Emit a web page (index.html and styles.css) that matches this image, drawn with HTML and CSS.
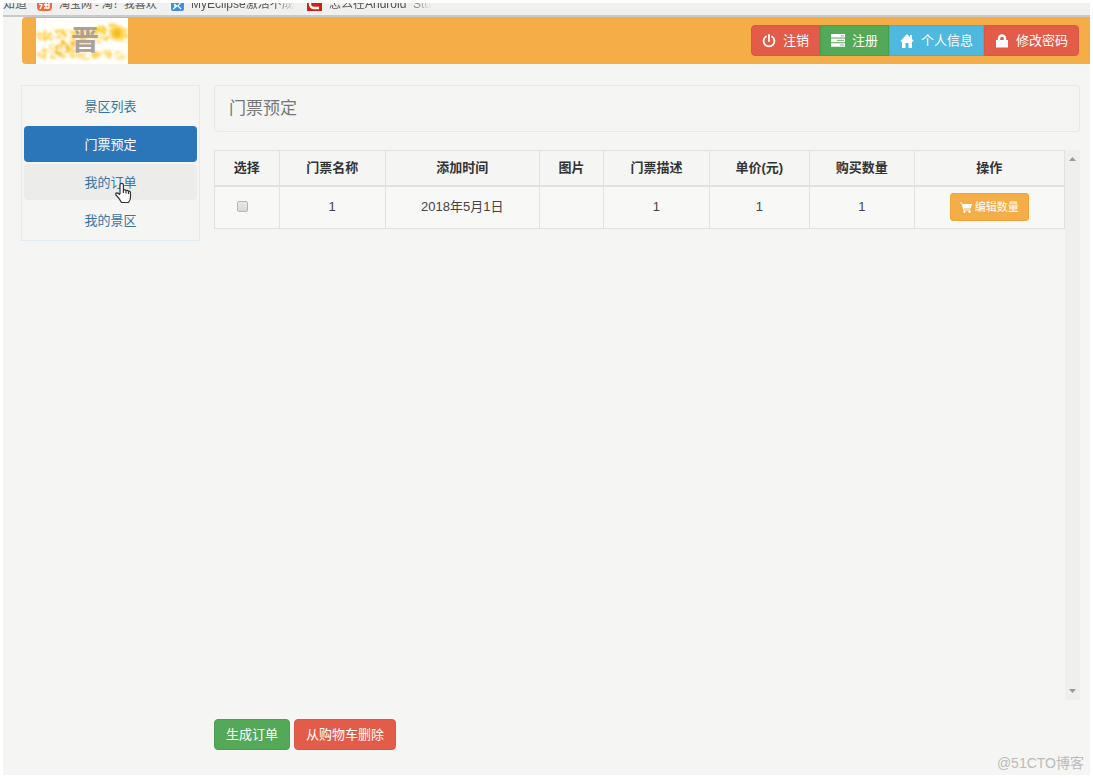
FILE: index.html
```html
<!DOCTYPE html>
<html lang="zh-CN">
<head>
<meta charset="utf-8">
<title>门票预定</title>
<link rel="stylesheet" href="styles.css">
</head>
<body>
<div class="window">
  <nav class="bookmarks" aria-label="书签">
    <a class="bookmark first" href="#">知道</a>
    <a class="bookmark taobao" href="#">
      <svg width="15" height="14" viewBox="0 0 15 14"><rect width="15" height="14" rx="4" fill="#ee6a3c"/><path d="M3 3l2 2M2 7l3 1-2 4M6 5h6v6H7M7 8h5M9 5v6" fill="none" stroke="#fff" stroke-width="1.3"/></svg>
      <span>淘宝网 - 淘！我喜欢</span></a>
    <a class="bookmark eclipse" href="#">
      <svg width="13" height="14" viewBox="0 0 13 14"><rect width="13" height="14" rx="2" fill="#3d8fe0"/><path d="M2 12l4-3-3-2M5 5h5L7 9l3 3M3 9h4" fill="none" stroke="#fff" stroke-width="1.2"/></svg>
      <span>MyEclipse激活不成功</span></a>
    <a class="bookmark android" href="#">
      <svg width="15" height="14" viewBox="0 0 15 14"><rect width="15" height="14" fill="#d41f16"/><path d="M12 3H7a4 4 0 0 0 0 8h5" fill="none" stroke="#fff" stroke-width="2.4"/></svg>
      <span>怎么在Android&nbsp; Stu</span></a>
  </nav>

  <header class="topbar">
    <a class="logo" href="#" aria-label="晋">
      <svg class="logo-art" viewBox="0 0 92 46">
        <defs>
          <filter id="splash" x="-10%" y="-30%" width="120%" height="160%">
            <feTurbulence type="fractalNoise" baseFrequency=".2" numOctaves="2" seed="8" result="noise"/>
            <feColorMatrix in="noise" type="matrix" values="0 0 0 0 0 0 0 0 0 0 0 0 0 0 0 0 7 0 0 -2.9" result="holes"/>
            <feComposite in="SourceGraphic" in2="holes" operator="in" result="dots"/>
            <feDisplacementMap in="dots" in2="noise" scale="7" result="spots"/>
            <feGaussianBlur in="spots" stdDeviation=".9"/>
          </filter>
          <radialGradient id="sun"><stop offset="0" stop-color="#f7b21c"/><stop offset=".5" stop-color="#fccb38"/><stop offset="1" stop-color="#ffe68a" stop-opacity=".3"/></radialGradient>
        </defs>
        <g filter="url(#splash)">
          <path d="M1 17Q14 9 32 12T60 9Q74 3 91 11V25Q76 19 64 24T39 27Q22 34 8 36L2 33Q18 26 35 21L2 22Z" fill="#ffd24a"/>
          <path d="M1 37Q18 26 35 31T63 32Q74 29 90 36V42L64 39Q48 45 40 39L7 42Z" fill="#ffdc72"/>
          <path d="M8 38L18 28L35 21L40 28L21 38Z" fill="#f9bb25"/>
        </g>
        <circle cx="81" cy="15" r="9" fill="url(#sun)"/>
        <circle cx="59" cy="37" r="5" fill="url(#sun)" opacity=".6"/>
      </svg>
      <span class="logo-text">晋</span>
    </a>
    <div class="actions">
      <button class="btn red" type="button"><svg width="14" height="14" viewBox="0 0 14 14"><path d="M4 2.5A5.4 5.4 0 1 0 10 2.5M7 1v6" fill="none" stroke="#fff" stroke-width="1.8" stroke-linecap="round"/></svg>注销</button>
      <button class="btn green" type="button"><svg width="14" height="14" viewBox="0 0 14 14"><path d="M0 0h14v3.600H0zM0 4.600h14v3.600H0zM0 9.200h14v3.600H0z" fill="#fff"/><path d="M10 1.800h3M6 6.400h7M9 11h4" stroke="#52a855" stroke-width=".8"/></svg>注册</button>
      <button class="btn blue" type="button"><svg width="14" height="14" viewBox="0 0 14 14"><path d="M7 0L0 7.500h2V14h3.500V9h3v5H12V7.500h2L12 5V1h-2v2z" fill="#fff"/></svg>个人信息</button>
      <button class="btn red" type="button"><svg width="14" height="14" viewBox="0 0 14 14"><path d="M1 6h12v7.500H1z" fill="#fff"/><path d="M4 7V4.500a3 3 0 0 1 6 0V7" fill="none" stroke="#fff" stroke-width="2.400"/></svg>修改密码</button>
    </div>
  </header>

  <div class="body">
    <nav class="sidebar" aria-label="菜单">
      <a href="#">景区列表</a>
      <a class="active" href="#" aria-current="page">门票预定</a>
      <a class="hovered" href="#">我的订单
        <svg class="cursor" width="18" height="22" viewBox="0 0 18 22"><path d="M6 12V3a1.700 1.700 0 0 1 3.400 0V8q1.600-1 2.600.6 1.700-.8 2.500.7 2-.5 2 1.700V15q0 3-2 5.500H7.500Q6 17 2 13q-1-2 1-2.200 1.500 0 3 2.200M9.400 8v3M12 8.600V11.500M14.500 9.300V12" fill="#fff" stroke="#333" stroke-width="1.200" stroke-linejoin="round"/></svg></a>
      <a href="#">我的景区</a>
    </nav>

    <main class="content">
      <h1 class="title">门票预定</h1>
      <div class="list">
        <div class="table-area">
          <table>
            <colgroup><col class="c-pick"><col class="c-name"><col class="c-time"><col class="c-image"><col class="c-desc"><col class="c-price"><col class="c-count"><col class="c-action"></colgroup>
            <thead>
              <tr><th>选择</th><th>门票名称</th><th>添加时间</th><th>图片</th><th>门票描述</th><th>单价(元)</th><th>购买数量</th><th>操作</th></tr>
            </thead>
            <tbody>
              <tr><td><input class="pick" type="checkbox" aria-label="选择"></td><td>1</td><td>2018年5月1日</td><td></td><td>1</td><td>1</td><td>1</td>
                <td><button class="btn small orange" type="button"><svg width="12" height="11" viewBox="0 0 12 11"><path d="M0 .5h2l.5 1.500H12L10.500 6.500H4L4.300 7.500H10.500V8.500H3.500L1.500 1.500H0z" fill="#fff"/><circle cx="4.500" cy="9.800" r="1.200" fill="#fff"/><circle cx="9.500" cy="9.800" r="1.200" fill="#fff"/></svg>编辑数量</button></td></tr>
            </tbody>
          </table>
        </div>
        <div class="scrollbar" aria-hidden="true">
          <svg width="7" height="4" viewBox="0 0 7 4"><path d="M0 4L3.500 0L7 4z" fill="#999"/></svg>
          <svg width="7" height="4" viewBox="0 0 7 4"><path d="M0 0h7L3.500 4z" fill="#999"/></svg>
        </div>
      </div>
      <div class="footer-actions">
        <button class="btn green" type="button">生成订单</button>
        <button class="btn red" type="button">从购物车删除</button>
      </div>
    </main>
  </div>
  <div class="watermark">@51CTO博客</div>
</div>
</body>
</html>
```
FILE: styles.css
```css
* { box-sizing: border-box; }

body {
  margin: 0;
  padding: 3px 3px 5px;
  background: #fff;
  color: #444;
  font: 13px/20px "Liberation Sans", "Noto Sans CJK SC", sans-serif;
}

a { color: #38749f; text-decoration: none; }
svg { flex: none; }

.window {
  position: relative;
  display: flex;
  flex-direction: column;
  min-height: calc(100vh - 8px);
  background: #f5f5f4;
}

.bookmarks {
  display: flex;
  align-items: flex-end;
  gap: 12px;
  height: 14px;
  padding-bottom: 4px;
  overflow: hidden;
  background: #f0f0ef;
  border-bottom: 2px solid #c9c9c9;
}

.bookmark {
  display: flex;
  flex: none;
  align-items: flex-end;
  gap: 7px;
  color: #555;
  font-size: 12px;
  line-height: 13px;
  white-space: nowrap;
}
.bookmark.first { width: 22px; }
.bookmark.taobao { width: 122px; font-size: 11px; }
.bookmark.eclipse { width: 124px; }
.bookmark.android { width: 126px; }
.bookmark.eclipse span,
.bookmark.android span {
  overflow: hidden;
  mask-image: linear-gradient(to right, #000 80%, transparent);
}

.topbar {
  display: flex;
  align-items: center;
  justify-content: space-between;
  height: 47px;
  margin-left: 19px;
  padding: 0 11px 0 14px;
  background: #f5ad47;
  border-radius: 4px 0 0 4px;
}

.logo {
  position: relative;
  display: flex;
  align-items: center;
  justify-content: center;
  width: 92px;
  height: 46px;
  background: #fffefb;
}
.logo-art { width: 92px; height: 46px; }
.logo-text {
  position: absolute;
  left: 35px;
  top: 7px;
  color: #aaa09c;
  font-size: 28px;
  font-weight: 700;
  line-height: 32px;
}

.btn {
  display: inline-flex;
  align-items: center;
  justify-content: center;
  height: 31px;
  padding: 0 11px;
  border: 1px solid transparent;
  border-radius: 4px;
  color: #fff;
  font: inherit;
  white-space: nowrap;
}
.red { background: #e25c49; border-color: #d95743; }
.green { background: #53a957; border-color: #4b9e50; }
.blue { background: #4fb8df; border-color: #46add5; }
.orange { background: #f5ad47; border-color: #f1a43a; }
.small { height: 28px; padding: 0 9px; border-radius: 3px; font-size: 11px; gap: 3px; }

.actions { display: flex; }
.actions .btn { gap: 7px; padding: 0 10px; border-radius: 0; }
.actions .btn:first-child { border-radius: 4px 0 0 4px; }
.actions .btn:last-child { border-radius: 0 4px 4px 0; }

.body {
  display: flex;
  flex: 1;
  align-items: stretch;
  gap: 14px;
  padding: 21px 10px 25px 18px;
}

.sidebar {
  display: flex;
  flex: 0 0 179px;
  flex-direction: column;
  align-self: flex-start;
  gap: 2px;
  padding: 2px;
  border: 1px solid #deebf2;
}
.sidebar a {
  position: relative;
  height: 36px;
  border-radius: 4px;
  line-height: 37px;
  text-align: center;
}
.sidebar .active { background: #2b76b9; color: #fff; }
.sidebar .hovered { background: #ececeb; }
.cursor { position: absolute; left: 90px; top: 18px; }

.content {
  display: flex;
  flex: 1;
  flex-direction: column;
  min-width: 0;
}

.title {
  margin: 0 0 18px;
  padding: 0 14px;
  border: 1px solid #e8e8e7;
  border-radius: 3px;
  color: #777;
  font-size: 17px;
  font-weight: 400;
  line-height: 45px;
}

.list { display: flex; flex: 1; margin-bottom: 19px; }
.table-area { flex: 1; min-width: 0; }

table {
  width: 100%;
  border-collapse: collapse;
  table-layout: fixed;
}
th, td {
  padding: 0;
  border: 1px solid #e1e1e0;
  text-align: center;
  vertical-align: middle;
}
th { height: 35px; border-bottom-width: 2px; color: #333; font-weight: 700; }
td { height: 43px; background: #f8f8f7; }
td .btn, .pick { vertical-align: middle; }
.c-pick { width: 7.6%; }
.c-name { width: 12.5%; }
.c-time { width: 18.1%; }
.c-image { width: 7.6%; }
.c-desc { width: 12.4%; }
.c-price { width: 11.8%; }
.c-count { width: 12.3%; }
.c-action { width: 17.7%; }

.pick {
  width: 11px;
  height: 11px;
  margin: 0 8px 2px 0;
  appearance: none;
  background: linear-gradient(#e9e9e9, #d9d9d9);
  border: 1px solid #b5b5b5;
  border-radius: 2px;
}

.scrollbar {
  display: flex;
  flex: 0 0 15px;
  flex-direction: column;
  align-items: center;
  justify-content: space-between;
  padding: 7px 0;
  background: #efefee;
}

.footer-actions { display: flex; gap: 4px; }
.footer-actions .btn { padding: 0 11px; }

.watermark {
  position: absolute;
  right: 6px;
  bottom: 2px;
  color: #bbb;
  font-size: 14px;
}
```
